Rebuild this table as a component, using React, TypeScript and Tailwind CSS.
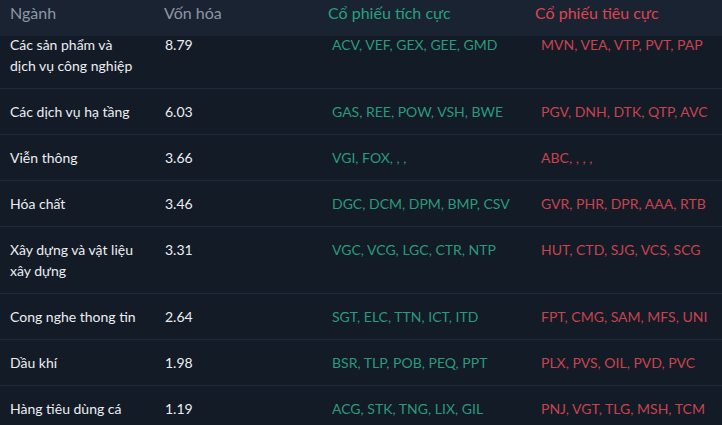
const rows = [
  {
    name: 'Các sản phẩm và dịch vụ công nghiệp',
    cap: '8.79',
    up: 'ACV, VEF, GEX, GEE, GMD',
    down: 'MVN, VEA, VTP, PVT, PAP'
  },
  { name: 'Các dịch vụ hạ tầng', cap: '6.03', up: 'GAS, REE, POW, VSH, BWE', down: 'PGV, DNH, DTK, QTP, AVC' },
  { name: 'Viễn thông', cap: '3.66', up: 'VGI, FOX, , ,', down: 'ABC, , , ,' },
  { name: 'Hóa chất', cap: '3.46', up: 'DGC, DCM, DPM, BMP, CSV', down: 'GVR, PHR, DPR, AAA, RTB' },
  { name: 'Xây dựng và vật liệu xây dựng', cap: '3.31', up: 'VGC, VCG, LGC, CTR, NTP', down: 'HUT, CTD, SJG, VCS, SCG' },
  { name: 'Cong nghe thong tin', cap: '2.64', up: 'SGT, ELC, TTN, ICT, ITD', down: 'FPT, CMG, SAM, MFS, UNI' },
  { name: 'Dầu khí', cap: '1.98', up: 'BSR, TLP, POB, PEQ, PPT', down: 'PLX, PVS, OIL, PVD, PVC' },
  { name: 'Hàng tiêu dùng cá', cap: '1.19', up: 'ACG, STK, TNG, LIX, GIL', down: 'PNJ, VGT, TLG, MSH, TCM' }
]

export default function App() {
  return (
    <div className="w-[722px] h-[425px] overflow-hidden bg-[#131b26] font-['Lato','Noto_Sans',sans-serif]">
      <div className="relative z-10 grid grid-cols-[154px_164px_208px_1fr] h-[36px] bg-[#1a2331] text-[16px] leading-[24px] pt-[1px]">
        <div className="pl-[10px] text-[#8d97a6]">Ngành</div>
        <div className="pl-[10px] text-[#8d97a6]">Vốn hóa</div>
        <div className="pl-[10px] text-[#28a07f]">Cổ phiếu tích cực</div>
        <div className="pl-[9px] text-[#de4450]">Cổ phiếu tiêu cực</div>
      </div>

      {/* Body, scrolled a little under the header */}
      <div className="-mt-[14px] text-[14px] leading-[21px]">
        {rows.map((row, i) => (
          <div
            key={i}
            className="grid grid-cols-[154px_164px_208px_1fr] py-[12px] border-b border-[#1f2a39]"
          >
            <div className="pl-[10px] pr-[16px] text-[#eceef2]">{row.name}</div>
            <div className="pl-[11px] text-[#eceef2]">{row.cap}</div>
            <div className="pl-[14px] text-[#2a9a7c]">{row.up}</div>
            <div className="pl-[15px] text-[#c8434f]">{row.down}</div>
          </div>
        ))}
      </div>
    </div>
  )
}
